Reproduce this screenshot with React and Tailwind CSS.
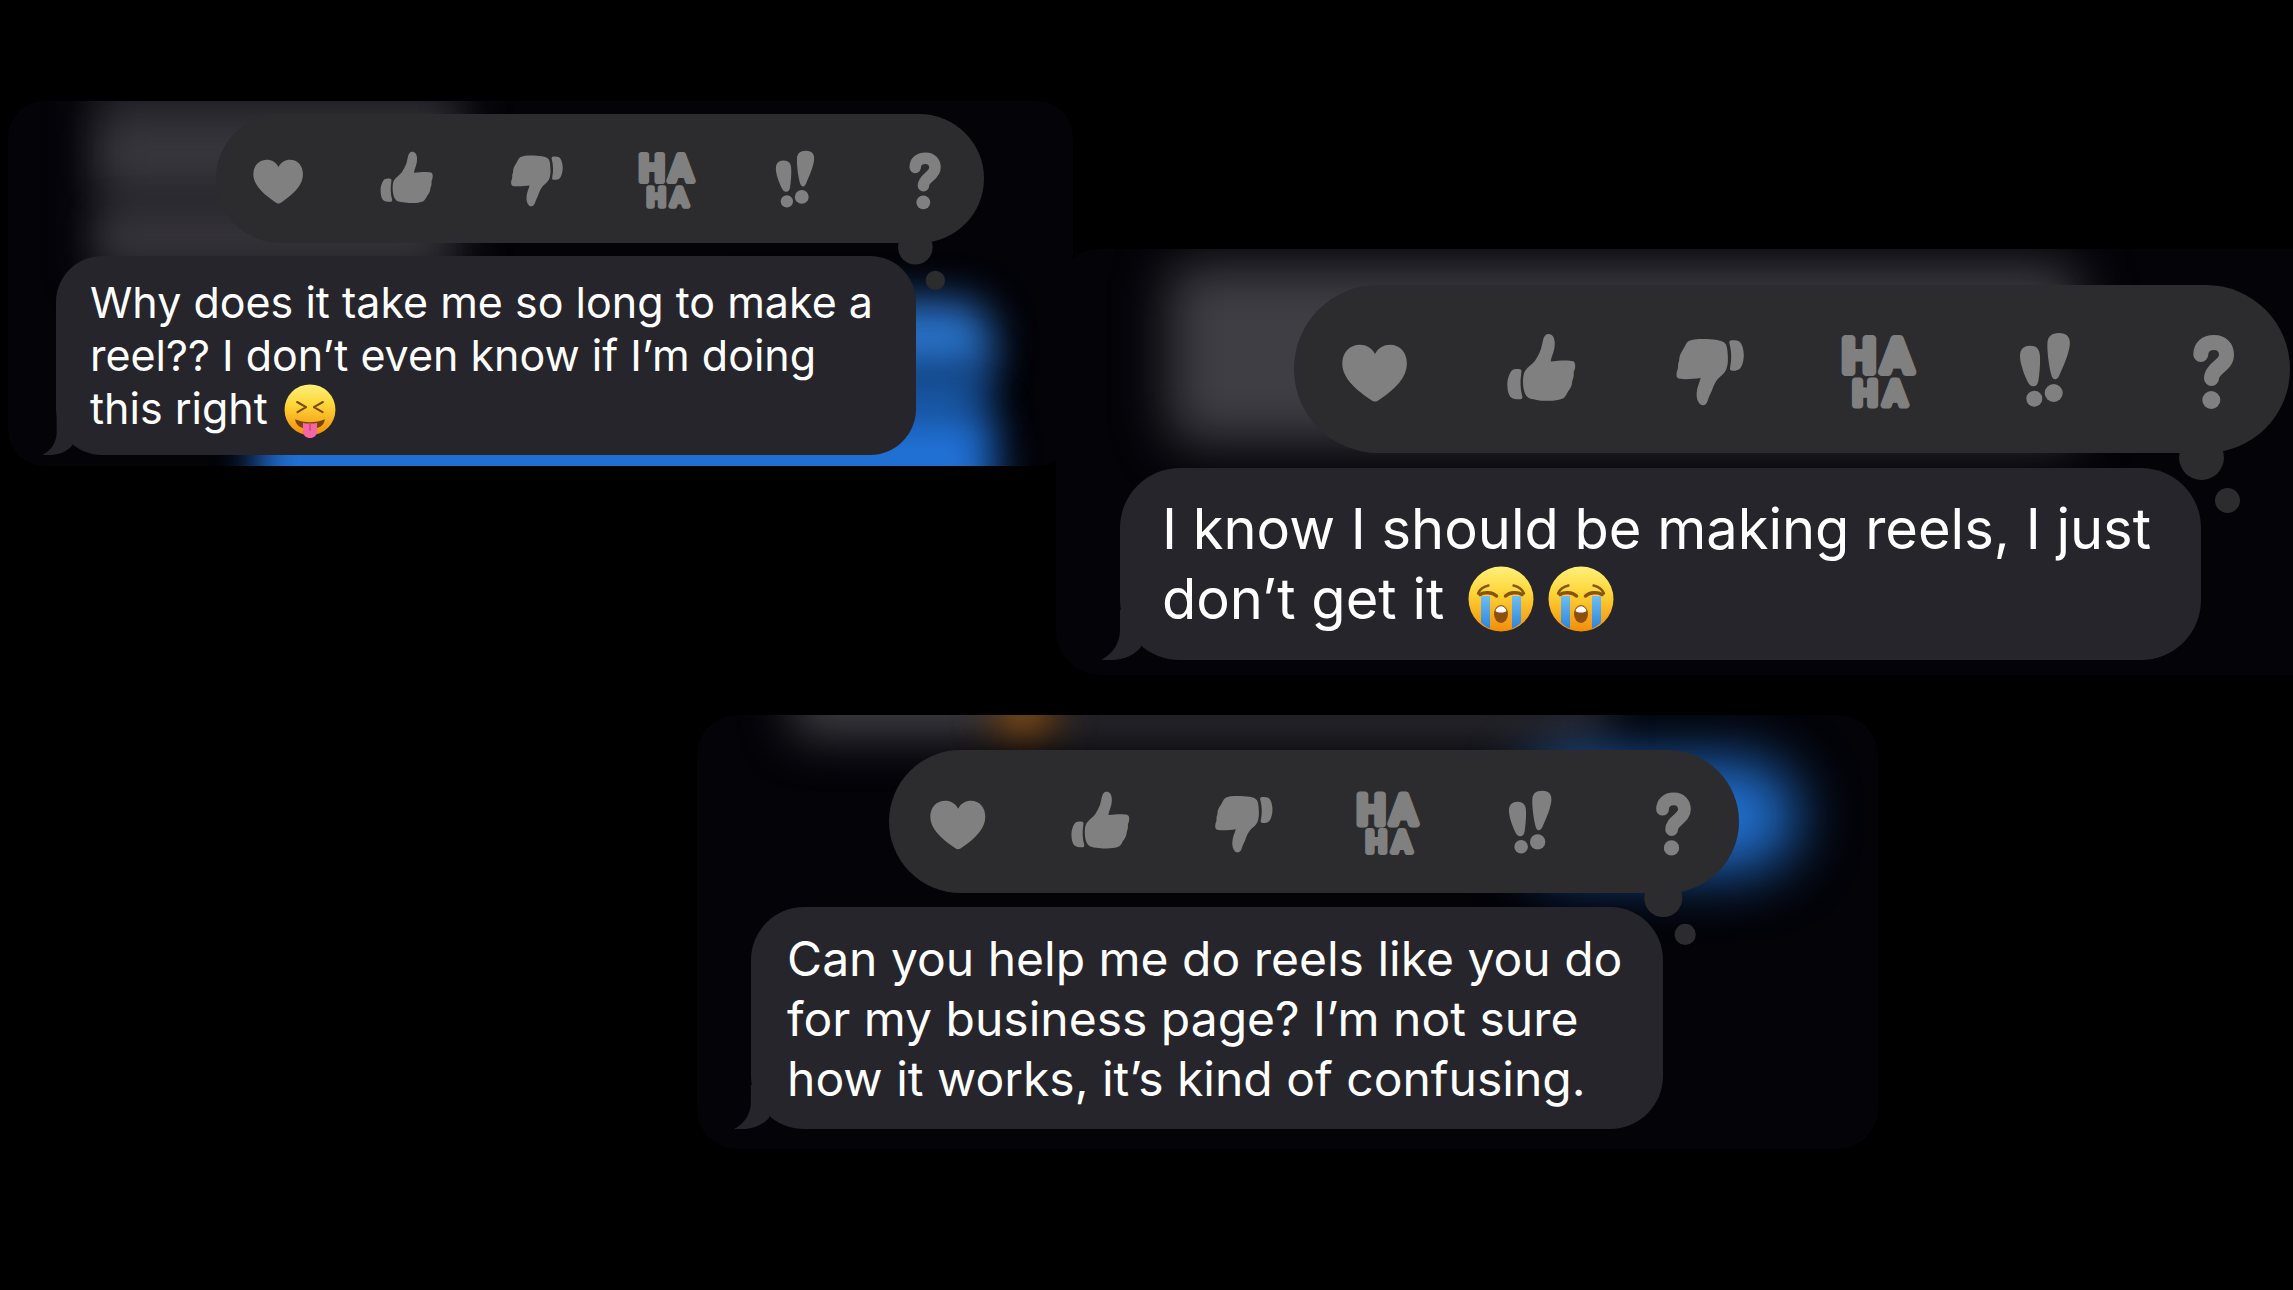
import React from "react";
import clsx from "clsx";

function HeartIcon() {
  return (
    <path d="M81 69C77.500 62.500 72 59.700 66 59.700C55.500 59.700 48.300 67.500 48.300 78.500C48.300 92 60 103.500 76 114.200C78 115.700 79.500 116.500 81 116.500C82.500 116.500 84 115.700 86 114.200C102 103.500 112.900 92 112.900 78.500C112.900 67.500 106 59.700 96 59.700C90 59.700 84.500 62.500 81 69Z" />
  );
}

function ThumbUpIcon() {
  return (
    <>
      <path d="M88.500 49C85.500 49 84 51.500 83.200 54.500L81 64C79.500 68 77.500 72 75 75.700C72 79.500 67.500 82 65 86C63.300 89 63 93 63 97C63 102 64 108 66.700 111.300C68.500 113.800 72 114.200 76.700 114.900C81 115.600 84 115.900 88.300 115.800C94 115.800 99 115.300 103 113.500C105.500 112 106.300 109.500 108 106.500C110.500 103.500 111.700 101 112 98C112 95.500 113.600 93.500 113.600 91C114.200 89 113 87.500 114.300 85.500C115.800 82.500 115.500 77 113 76.300C108 74.800 98 75.800 90.700 76.500C91.200 72.500 93 69 94 65C94.800 61.500 94.900 58.500 94.600 56C94.100 52 92.200 49 88.500 49Z" />
      <path d="M60 84.200C57 83.800 54.500 83.700 52.500 85C49.500 87.500 47.300 94 47.300 99.500C47.300 105 48.500 109.500 50.500 112C53 114.500 57.500 114.300 60.500 114.300C62.200 114.200 62.700 113 62.200 111C60.300 104 60 97 61.200 88.500C61.600 86 61.700 84.500 60 84.200Z" />
    </>
  );
}

function ThumbDownIcon() {
  return (
    <>
      <path d="M77.300 54C71 54 65.500 54.400 62.300 56.300C59.500 58.500 58.500 63 55.700 66.700C53.500 70 53.300 73 53 76.500C51.500 78.500 52.500 81 51.800 84C50.300 87 50 91.500 51.700 93C54 94.800 66 94.200 74.700 93C73.500 97.500 71 102 70.700 107.700C70.400 111.500 70.900 114.500 72.300 116.800C73.500 119 75 120.400 76.900 120.300C79.500 120.200 80.700 118.500 81.600 116C83 111.500 84 110 85.700 106C88.500 99 89.500 96.500 92.300 93.500C95 90.500 98.500 88.500 100.200 84.500C101.500 81 102 77.500 101.900 73.500C101.800 68 101.300 62.500 100 59.500C98.500 57 95 55.800 91 55C86.500 54.300 81.500 54 77.300 54Z" />
      <path d="M104.500 55.600C106.500 55 110.500 55.100 113 56.200C116 58.200 117.800 64.500 117.800 70C117.800 75.500 116.300 81.500 113.500 84C111 86 107.500 85.900 105.500 85.500C103.700 85 103.800 83.700 104.200 82C105.700 74.500 105.600 66.500 103.700 59.500C103.100 57.500 103 56.200 104.500 55.600Z" />
    </>
  );
}

function HahaIcon() {
  return (
    <text
      fontFamily="Roboto, sans-serif"
      fontWeight="500"
      fontSize="47"
      textAnchor="middle"
      stroke="currentColor"
      strokeWidth="8"
      strokeLinejoin="round"
    >
      <tspan x="67" y="87">H</tspan>
      <tspan x="105" y="87">A</tspan>
      <tspan x="73" y="120" fontSize="34" strokeWidth="7">H</tspan>
      <tspan x="103" y="120" fontSize="34" strokeWidth="7">A</tspan>
    </text>
  );
}

function ExclaimIcon() {
  return (
    <>
      <path d="M72.500 60.700C65.500 60.300 62 64.500 62 71C62 79 66.500 90 69.500 96.500C71 99.800 73 101.400 75.500 101.300C78 101.200 79.700 99.500 80.300 96C81.700 88 82.300 78.500 82 71.500C81.700 64.500 79 61 72.500 60.700Z" />
      <circle cx="76.300" cy="113.700" r="8" />
      <path d="M101 48C93.500 48 89.500 51.500 89.400 59C89.200 67.500 90.800 79.500 92.800 88C93.700 92 95 94.300 97.300 94.300C99.500 94.300 100.700 92 102 88.800C105.500 81 110 70.500 111.500 62C113.200 53 109.500 48 101 48Z" />
      <circle cx="95.700" cy="108" r="9" />
    </>
  );
}

function QuestionIcon() {
  return (
    <>
      <path
        d="M76.800 69.500C76.800 62 82 57.500 90 57.500C98 57.500 102.500 62.500 102.500 70C102.500 80.500 87.500 83 87.500 93.500"
        fill="none"
        stroke="currentColor"
        strokeWidth="15"
        strokeLinecap="round"
      />
      <circle cx="87.300" cy="115" r="9" />
    </>
  );
}

const REACTIONS = [
  { label: "Love", Icon: HeartIcon },
  { label: "Like", Icon: ThumbUpIcon },
  { label: "Dislike", Icon: ThumbDownIcon },
  { label: "Laugh", Icon: HahaIcon },
  { label: "Emphasize", Icon: ExclaimIcon },
  { label: "Question", Icon: QuestionIcon },
];

function EmojiFace({ id }) {
  return (
    <>
      <defs>
        <linearGradient id={id} x1="0" y1="0" x2="0" y2="1">
          <stop offset="0" stopColor="#fff07a" />
          <stop offset="0.4" stopColor="#fdd638" />
          <stop offset="1" stopColor="#f28c0a" />
        </linearGradient>
      </defs>
      <circle cx="33" cy="33" r="32.500" fill={`url(#${id})`} />
    </>
  );
}

function TongueEmoji({ id, className }) {
  return (
    <svg viewBox="0 0 66 69" role="img" aria-label="😝" className={className}>
      <EmojiFace id={id} />
      <path
        d="M16.500 23L28 29.500L17 36M49.500 23L38 29.500L49 36"
        fill="none"
        stroke="#7a4a08"
        strokeWidth="2.600"
        strokeLinecap="round"
        strokeLinejoin="round"
      />
      <path
        d="M14 45C25 50 41 50 52 45C51 54 43 57.500 33 57.500C23 57.500 15 54 14 45Z"
        fill="#7a420a"
      />
      <path
        d="M24 49.500C29 51 37 51 42 49.500V60C42 66 38 69 33 69C28 69 24 66 24 60Z"
        fill="#f566a5"
      />
      <path d="M33 51V59" stroke="#d8407f" strokeWidth="2" strokeLinecap="round" />
    </svg>
  );
}

function CryEmoji({ id, className }) {
  return (
    <svg viewBox="0 0 66 66" role="img" aria-label="😭" className={className}>
      <defs>
        <linearGradient id={`${id}-tear`} x1="0" y1="0" x2="0" y2="1">
          <stop offset="0" stopColor="#6fbdf2" />
          <stop offset="1" stopColor="#2b86dc" />
        </linearGradient>
      </defs>
      <EmojiFace id={id} />
      <path
        d="M13 30H22V62.500C18.500 61 15.500 59 13 56.500ZM44 30H53V56.500C50.500 59 47.500 61 44 62.500Z"
        fill={`url(#${id}-tear)`}
      />
      <g fill="none" stroke="#8a5410" strokeLinecap="round">
        <path
          d="M10 27.500C12 23 15.500 20.500 20.500 19.500M56 27.500C54 23 50.500 20.500 45.500 19.500"
          strokeWidth="2.400"
        />
        <path
          d="M12 28.500C16 26 24 26 28.500 30M54 28.500C50 26 42 26 37.500 30"
          strokeWidth="3.400"
        />
      </g>
      <ellipse cx="33" cy="48" rx="7" ry="9" fill="#8f4f0c" />
      <path d="M27.500 45C29 38.500 37 38.500 38.500 45C36 47 30 47 27.500 45Z" fill="#fff" />
    </svg>
  );
}

function ReactionBar({ className, dotsClassName }) {
  return (
    <div
      role="toolbar"
      aria-label="Reactions"
      className={clsx("relative flex max-w-full rounded-full bg-[#2c2c2e]", className)}
    >
      {REACTIONS.map(({ label, Icon }) => (
        <button
          key={label}
          type="button"
          aria-label={label}
          className="min-w-0 flex-1 cursor-pointer text-[#808080]"
        >
          <svg viewBox="0 0 166 168" fill="currentColor" className="h-full w-full">
            <Icon />
          </svg>
        </button>
      ))}
      <svg
        viewBox="0 0 61 78"
        fill="#2c2c2e"
        aria-hidden="true"
        className={clsx("absolute", dotsClassName)}
      >
        <circle cx="22.500" cy="22.500" r="22.500" />
        <circle cx="48.500" cy="65.500" r="12.500" />
      </svg>
    </div>
  );
}

function Bubble({ className, tailClassName, children }) {
  return (
    <div
      className={clsx(
        "relative max-w-full bg-[#26252b] whitespace-nowrap text-white",
        className
      )}
    >
      <svg
        viewBox="0 0 60 50"
        fill="#26252b"
        aria-hidden="true"
        className={clsx("absolute bottom-0", tailClassName)}
      >
        <path d="M19 0V20C19 33 12 44 0 50C16 51 30 49 40 37V0Z" />
      </svg>
      <p className="relative">{children}</p>
    </div>
  );
}

// glow holds the blurred chat that sits behind the focused message
function Card({ className, glow, children }) {
  return (
    <article className={clsx("relative overflow-hidden bg-[#030308]", className)}>
      <div aria-hidden="true" className="absolute inset-0">
        {glow}
      </div>
      {children}
    </article>
  );
}

export default function App() {
  return (
    <main className="min-h-screen overflow-hidden bg-black pt-[101px] font-['Inter',sans-serif]">
      <div className="flex items-start pl-2">
        <Card
          className="w-[1065px] shrink-0 rounded-[36px] pt-[13px] pb-[11px]"
          glow={
            <>
              <div className="absolute -top-5 left-[84px] h-[200px] w-[370px] bg-[#28272d] blur-[22px]" />
              <div className="absolute top-[30px] left-[96px] h-[44px] w-[350px] bg-[#3b3a40] blur-[20px]" />
              <div className="absolute top-[118px] left-[96px] h-[36px] w-[330px] bg-[#37363b] blur-[18px]" />
              <div className="absolute top-[200px] left-[700px] h-[84px] w-[284px] rounded-[36px] bg-[#2a72c8] blur-[20px]" />
              <div className="absolute top-[260px] left-[700px] h-[60px] w-[276px] bg-[#154d92] blur-[20px]" />
              <div className="absolute top-[306px] left-[250px] h-[160px] w-[736px] rounded-[30px] bg-[#2070d4] blur-[20px]" />
            </>
          }
        >
          <ReactionBar
            className="ml-[208px] h-[129px] w-[768px]"
            dotsClassName="right-[39px] -bottom-[47px] h-[60px] w-[47px]"
          />
          <Bubble
            className="mt-[13px] ml-12 w-[860px] rounded-[46px] py-5 pl-[34px] text-[43px] leading-[53px]"
            tailClassName="-left-[14px] h-[38px] w-[46px]"
          >
            Why does it take me so long to make a
            <br />
            reel?? I don’t even know if I’m doing
            <br />
            this right{" "}
            <TongueEmoji
              id="tongue"
              className="-my-1 ml-1 inline-block h-[54px] w-[52px] align-[-10px]"
            />
          </Bubble>
        </Card>

        <Card
          className="mt-[148px] -ml-[17px] min-w-0 flex-1 rounded-l-[44px] pt-9 pb-[15px]"
          glow={
            <div className="absolute top-[16px] left-[112px] h-[178px] w-[910px] rounded-[20px] bg-[#3f3e44] blur-[26px]" />
          }
        >
          <ReactionBar
            className="ml-[238px] h-[168px] w-[996px]"
            dotsClassName="right-[50px] -bottom-[60px] h-[78px] w-[61px]"
          />
          <Bubble
            className="mt-[15px] ml-16 w-[1081px] rounded-[60px] py-[26px] pl-[42px] text-[56px] leading-[70px]"
            tailClassName="-left-[19px] h-[50px] w-[60px]"
          >
            I know I should be making reels, I just
            <br />
            don’t get it{" "}
            <CryEmoji
              id="cry-a"
              className="mr-[14px] ml-2 inline-block size-[66px] align-[-13px]"
            />
            <CryEmoji id="cry-b" className="inline-block size-[66px] align-[-13px]" />
          </Bubble>
        </Card>
      </div>

      <Card
        className="mt-10 ml-[30.4%] w-[51.5%] rounded-[40px] pt-[35px] pb-5"
        glow={
          <>
            <div className="absolute -top-[40px] left-[96px] h-[60px] w-[210px] bg-[#434247] blur-[24px]" />
            <div className="absolute -top-[30px] left-[350px] h-[64px] w-[560px] bg-[#252429] blur-[20px]" />
            <div className="absolute -top-[30px] left-[292px] h-[54px] w-[70px] rounded-full bg-[#7c4c1c] blur-[18px]" />
            <div className="absolute top-[46px] left-[820px] h-[110px] w-[280px] rounded-[55px] bg-[#2272d2] blur-[30px]" />
          </>
        }
      >
        <ReactionBar
          className="ml-48 h-[143px] w-[850px]"
          dotsClassName="right-[43px] -bottom-[52px] h-[66px] w-[52px]"
        />
        <Bubble
          className="mt-[14px] ml-[54px] w-[912px] rounded-[53px] pt-[22px] pb-5 pl-9 text-[48px] leading-[60px]"
          tailClassName="-left-[17px] h-[44px] w-[53px]"
        >
          Can you help me do reels like you do
          <br />
          for my business page? I’m not sure
          <br />
          how it works, it’s kind of confusing.
        </Bubble>
      </Card>
    </main>
  );
}
